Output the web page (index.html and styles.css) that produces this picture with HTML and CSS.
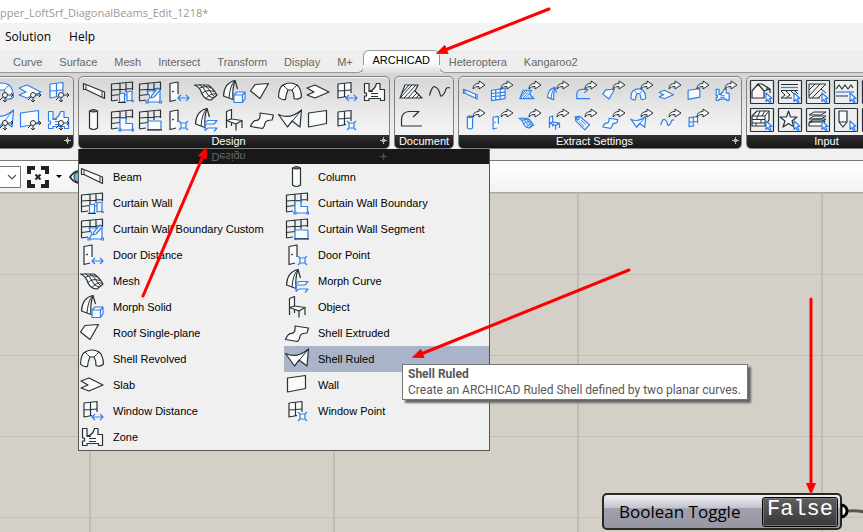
FILE: index.html
```html
<!DOCTYPE html>
<html lang="en">
<head>
<meta charset="utf-8">
<title>Grasshopper</title>
<link rel="stylesheet" href="styles.css">
</head>
<body>
<div class="app">
  <header class="titlebar">pper_LoftSrf_DiagonalBeams_Edit_1218*</header>
  <nav class="menubar">
    <button>Solution</button>
    <button>Help</button>
  </nav>
  <nav class="tabs">
    <div class="tab-run before">
      <button>Curve</button><button>Surface</button><button>Mesh</button><button>Intersect</button><button>Transform</button><button>Display</button><button>M+</button>
    </div>
    <button class="tab-active">ARCHICAD</button>
    <div class="tab-run after">
      <button>Heteroptera</button><button>Kangaroo2</button>
    </div>
  </nav>
  <main class="ribbon">
    <section class="panel cols3" data-kind="node" data-icons="shellRevolved slab window shellRuled wall zone">
      <div class="tools"></div>
      <footer><span></span><i class="more"></i></footer>
    </section>
    <section class="panel cols11" data-kind="plain" data-icons="beam curtainWall curtainCustom doorDistance mesh morphSolid roof shellRevolved slab windowDistance zone column curtainBoundary curtainSegment doorPoint morphCurve object shellExtruded shellRuled wall windowPoint">
      <div class="tools"></div>
      <footer><span>Design</span><i class="more"></i></footer>
      <div class="popup">
        <div class="popup-head"><span>Design</span><i class="more"></i></div>
        <div class="popup-list">
          <button data-icon="beam">Beam</button>
          <button data-icon="column">Column</button>
          <button data-icon="curtainWall">Curtain Wall</button>
          <button data-icon="curtainBoundary">Curtain Wall Boundary</button>
          <button data-icon="curtainCustom">Curtain Wall Boundary Custom</button>
          <button data-icon="curtainSegment">Curtain Wall Segment</button>
          <button data-icon="doorDistance">Door Distance</button>
          <button data-icon="doorPoint">Door Point</button>
          <button data-icon="mesh">Mesh</button>
          <button data-icon="morphCurve">Morph Curve</button>
          <button data-icon="morphSolid">Morph Solid</button>
          <button data-icon="object">Object</button>
          <button data-icon="roof">Roof Single-plane</button>
          <button data-icon="shellExtruded">Shell Extruded</button>
          <button data-icon="shellRevolved">Shell Revolved</button>
          <button data-icon="shellRuled" class="selected">Shell Ruled</button>
          <button data-icon="slab">Slab</button>
          <button data-icon="wall">Wall</button>
          <button data-icon="windowDistance">Window Distance</button>
          <button data-icon="windowPoint">Window Point</button>
          <button data-icon="zone">Zone</button>
        </div>
        <div class="tooltip" role="tooltip"><b>Shell Ruled</b><span>Create an ARCHICAD Ruled Shell defined by two planar curves.</span></div>
      </div>
    </section>
    <section class="panel cols2" data-kind="plain" data-icons="fill spline arc">
      <div class="tools"></div>
      <footer><span>Document</span></footer>
    </section>
    <section class="panel cols10" data-kind="extract" data-icons="beam curtain fill morph arc roof shellRevolved slab wall zone column door mesh object label shellExtruded shellRuled spline window">
      <div class="tools"></div>
      <footer><span>Extract Settings</span><i class="more"></i></footer>
    </section>
    <section class="panel cols6" data-kind="input" data-icons="house composite hatch lines blank blank brick star layers pen blank blank">
      <div class="tools"></div>
      <footer><span>Input</span><i class="more"></i></footer>
    </section>
  </main>
  <div class="toolbar">
    <div class="combo">
      <select aria-label="Zoom"><option></option></select>
      <svg viewBox="0 0 10 6"><path d="M1 1l4 4 4-4"/></svg>
    </div>
    <button class="focus" aria-label="Zoom extents">
      <svg viewBox="0 0 22 22"><path d="M2 8V2h6M14 2h6v6M20 14v6h-6M8 20H2v-6" stroke-width="4"/><path d="M8.500 8.500l5 5M13.500 8.500l-5 5" stroke-width="2"/></svg>
    </button>
    <i class="caret"></i>
    <button class="eye" aria-label="Named views">
      <svg viewBox="0 0 22 16"><path d="M1 8Q6 1 12 2Q18 2 21 8Q16 14 11 14Q5 14 1 8Z" fill="#fff" stroke="#223" stroke-width="1.6"/><circle cx="10" cy="8" r="5" fill="#59c4dc" stroke="#234"/></svg>
    </button>
  </div>
  <div class="canvas">
    <div class="node">
      <span class="node-name">Boolean Toggle</span>
      <button class="node-value">False</button>
      <svg class="grip" viewBox="0 0 24 18"><path d="M7 9Q14 8 24 10" stroke="#555" stroke-width="3"/><path d="M0 3A6 6 0 0 1 0 15Z" fill="#fff" stroke="#000" stroke-width="3"/></svg>
    </div>
  </div>
  <svg class="arrows" width="863" height="532" viewBox="0 0 863 532">
    <defs><marker id="head" viewBox="0 0 12 10" refX="2" refY="5" markerWidth="12" markerHeight="10" markerUnits="userSpaceOnUse" orient="auto"><path d="M0 0L12 5L0 10Z"/></marker></defs>
    <path d="M549 9L445 50"/>
    <path d="M143 296L203 156"/>
    <path d="M629 270L421 354"/>
    <path d="M811 299V485"/>
  </svg>
</div>
<script src="icons.js"></script>
</body>
</html>
```
FILE: styles.css
```css
* { box-sizing: border-box; }
body { margin: 0; background: #f0f0f0; font: 11px/14px "Liberation Sans", sans-serif; color: #000; }
button { border: 0; padding: 0; margin: 0; background: none; font: inherit; color: inherit; }
svg { display: block; fill: none; }
.app { position: relative; display: flex; flex-direction: column; min-height: 100vh; overflow: hidden; }

.titlebar { height: 23px; background: #fff; color: #999; font: 11px/25px "Open Sans", sans-serif; white-space: nowrap; }
.menubar { display: flex; gap: 18px; height: 27px; padding-left: 5px; background: #f3f3f3; font: 12px/27px "Open Sans", sans-serif; }

.tabs { display: flex; height: 23px; background: #eee; color: #666; }
.tab-run { display: flex; gap: 17px; margin-top: 7px; border-bottom: 1px solid #999; }
.before { padding: 0 10px 0 13px; border-right: 1px solid #999; border-radius: 0 0 6px 0; }
.after { flex: 1; padding-left: 9px; border-left: 1px solid #999; border-radius: 0 0 0 6px; }
.tab-run button { padding-bottom: 6px; margin-top: -2px; }
.tab-active { position: relative; width: 77px; margin: 0 -1px; padding-bottom: 3px; color: #000; background: linear-gradient(#fff 50%, #ddd); border-radius: 6px 6px 0 0; }
.tab-active::before { content: ""; position: absolute; inset: 0 0 auto; height: 14px; border: 1px solid #999; border-bottom: 0; border-radius: 6px 6px 0 0; }

.ribbon { display: flex; gap: 4px; height: 87px; margin-left: -14px; padding-top: 3px; background: linear-gradient(#d4d4d4, #f0f0f0 70%); }
.panel { position: relative; flex: none; height: 73px; border: 1px solid #808080; border-radius: 5px; background: linear-gradient(#d6d6d6, #f2f2f2 50px); box-shadow: inset 0 1px #f8f8f8; }
.tools { display: grid; grid-auto-rows: 28px; height: 58px; padding: 1px; }
.cols2 .tools { grid-template-columns: repeat(2, 28px); }
.cols3 .tools { grid-template-columns: repeat(3, 28px); }
.cols6 .tools { grid-template-columns: repeat(6, 28px); }
.cols10 .tools { grid-template-columns: repeat(10, 28px); }
.cols11 .tools { grid-template-columns: repeat(11, 28px); }
.tools button { display: grid; place-items: center; }
.panel footer, .popup-head { display: flex; align-items: center; height: 13px; line-height: 12px; color: #fff; background: linear-gradient(#303030, #161616); }
.panel footer { padding-bottom: 2px; border-radius: 0 0 4px 4px; }
.panel footer span, .popup-head span { flex: 1; text-align: center; }
.more { width: 7px; height: 7px; margin: 0 2px; background: linear-gradient(#bbb, #bbb) center / 1px 7px no-repeat, linear-gradient(#bbb, #bbb) center / 7px 1px no-repeat, linear-gradient(#bbb, #bbb) center / 3px 3px no-repeat; }

.icon { flex: none; width: 24px; height: 24px; overflow: visible; color: #263238; }
.icon path, .icon circle { stroke: currentColor; stroke-width: 1.2; stroke-linejoin: round; vector-effect: non-scaling-stroke; }
.icon .b { color: #2f80ed; }
.icon .w { fill: #fafafa; }
.icon .frame { fill: #eee; }
.icon .fine { stroke-width: 1; }

.popup { position: absolute; z-index: 2; top: 72px; left: -1px; width: 412px; border: 1px solid #555; border-top: 0; background: #f0f0f0; }
.popup-head { height: 15px; padding-right: 100px; background: #181818; color: #666; }
.popup-head span { transform: scaleY(-1); }
.popup-head .more { opacity: .3; }
.popup-list { display: grid; grid-template-columns: 1fr 1fr; grid-auto-rows: 26px; }
.popup-list button { display: flex; align-items: center; gap: 9px; padding-left: 1px; white-space: nowrap; }
.popup-list .selected { background: #a9b4c9; }
.tooltip { position: absolute; left: 323px; top: 215px; display: flex; flex-direction: column; padding: 1px 6px 1px 5px; border: 1px solid #767676; background: #fff; color: #575757; box-shadow: 3px 3px 2px #666; font: 12px/16px Roboto, sans-serif; white-space: nowrap; }

.toolbar { display: flex; align-items: center; height: 33px; border-top: 1px solid #777; border-bottom: 1px solid #aaa89c; background: linear-gradient(#fff, #f2f2f2); }
.combo { position: relative; width: 21px; height: 22px; }
.combo select { width: 100%; height: 100%; appearance: none; border: 1px solid #777; border-left: 0; background: #fff; }
.combo svg { position: absolute; right: 4px; top: 8px; width: 10px; height: 6px; stroke: #555; stroke-width: 1.2; }
.focus { margin-left: 6px; }
.focus svg { width: 22px; height: 22px; stroke: #222; }
.caret { margin: 0 7px; border: 3px solid transparent; border-top-color: #000; border-bottom: 0; }
.eye svg { width: 22px; height: 16px; }

.canvas { position: relative; flex: 1; background: linear-gradient(90deg, #c0bcb3 2px, transparent 2px) 89px 0 / 244px 100%, linear-gradient(#c3bfb6 1px, transparent 1px) 0 0 / 100% 81px, #d4d0c8; }
.node { position: absolute; left: 602px; top: 300px; display: flex; align-items: center; width: 240px; height: 37px; padding: 2px; border: 2px solid #282828; border-radius: 5px; background: linear-gradient(#f0f0f4, #c5c5cf 38%, #a0a0ae 40%, #9797a4); }
.node-name { flex: 1; padding-left: 13px; font: 17px/28px "Open Sans", sans-serif; }
.node-value { width: 76px; height: 30px; padding-bottom: 3px; border: 1px solid #000; border-radius: 3px; outline: 1px solid #777; outline-offset: -2px; background: linear-gradient(#606060, #363636); color: #fff; font: 22px/24px "Liberation Mono", monospace; }
.grip { position: absolute; left: 237px; top: 7px; width: 24px; height: 18px; }
.arrows { position: absolute; z-index: 5; left: 0; top: 0; pointer-events: none; }
.arrows > path { stroke: #f00; stroke-width: 3; stroke-linecap: round; marker-end: url(#head); }
.arrows marker path { fill: #f00; }
```
FILE: icons.js
```javascript
// Shapes on a 24-unit grid. p(): ink outline, w(): filled outline, b(): blue accent, f(): fine ink lines.
const p = d => `<path d="${d}"/>`;
const w = d => `<path class="w" d="${d}"/>`;
const b = d => `<g class="b"><path class="w" d="${d}"/></g>`;
const f = d => `<path class="fine" d="${d}"/>`;

const curtain = p('M1.5 21V4L22.5 2V10M10 3V14M16 3V12M1.5 10L22.5 8.5M1.5 15.5L10 14.5M1.5 21L8 20');
const door = w('M12 14V2L4 3.5V21.5L10 20') + p('M6 12L8 11');
const win = w('M17 13V2.5L4 4V18L12 16.5') + p('M10.5 3.5V17M4 11L17 10');
const morph = w('M13 .5Q2 3 1.5 16L11 19.5Q10 9 13 .5L15.500 9') + f('M13 .5Q8 5 7 18');
const distance = b('M12 18H23M15 15L12 18L15 21M20 15L23 18L20 21');
const point = b('M15 15H20V20H15ZM13 13L15 15M22 13L20 15M13 22L15 20M22 22L20 20');

const shapes = {
  beam: w('M1.5 3.500L22.500 12V18.500L4 9.500L1.500 9.500Z') + f('M1.5 9.500V3.500M4 5V9.500M20 11.500V17'),
  column: w('M7.500 3V20Q11.500 23 15.500 20V3') + '<path d="M7.5 3Q11.5 0 15.5 3Q11.5 5 7.5 3Z" fill="#777"/>',
  curtain: w('M1.5 5L22.5 2V18L1.5 21Z') + p('M8 4V20M15 3V19M1.5 10L22.5 8M1.5 15L22.5 13'),
  curtainWall: curtain + b('M9.5 14L14.5 13V21.500L9.5 22.500ZM17 12L22 11V20L17 21ZM14.5 15H17') + p('M8 22.500H16M21 21H24'),
  curtainBoundary: curtain + b('M10 10H16V15.5H22.5V22H10Z') + b('M9 21h2v2h-2zM22 21h1.500v2h-1.500z'),
  curtainCustom: curtain + b('M9 11H22V22H9L12 17Z') + b('M13 18L14 15L20 8L22 10L16 17Z') + b('M8 21h2v2h-2zM21.500 21h2v2h-2z'),
  curtainSegment: curtain + b('M10 13H23V21.500H10Z') + p('M9 22H24'),
  door, window: win, morph,
  doorDistance: door + distance,
  doorPoint: door + point,
  windowDistance: win + distance,
  windowPoint: win + point,
  mesh: w('M.5 5H14Q19 8 23 15L17 20Q11 20 8 14Q6 7 .5 5Z') + f('M5 4.500Q10 7 12 12Q14 17 19 18M9.500 5Q14 7 16 11Q18 15 21 17M5 8.500Q12 5 17 8M8 13.500Q12 9 20 11.500M12 18.500Q16 13 22 14'),
  morphSolid: morph + b('M12 15L15 12H23V19L20.500 22.500H12ZM12 15H20.500V22.500M20.500 15L23 12'),
  morphCurve: morph + b('M11 22.500V14.500L14 12.500H23L20 16H11M11 22.500L14 20H23L20 23.500'),
  roof: w('M.5 11L5 4.5L18.500 3.500L10 18.500Z'),
  shellRevolved: w('M.5 17Q1 7 5 5Q12 1 19 5Q23 8 23.5 17Q20 20.500 16 18.500Q16 13 14 10H10Q8 14 7.500 19.500Q3 20.500 .5 17Z') + f('M5 5Q7 7 10 10M19 5Q17 7 14 10'),
  slab: w('M1 8L9 5L23 12L9 18L1 15L8 12Z'),
  zone: w('M2.500 3.500H7V11.500Q13 10 14.500 3.500H18V9.500H22.500V20.500H18.500V18.500H7V20.500H2.500V16H4.500V13H2.500Z') + f('M9 13.500H16M9 16.500H16M7 11.500H11'),
  object: w('M4.500 3.500L9.500 1.500V11L20 12.500L14 16L4.500 12.500Z') + p('M4.500 12V20M14 16V22.500M20 12.500V20M9.500 15V18M4.500 12.500L9.500 11'),
  shellExtruded: w('M10 5L23.500 7L22 12Q16 12 15 15Q15 18 12.500 20.500L.5 18.500Q2 14 5 12.500Q11 13 10 5Z'),
  shellRuled: w('M.5 6.500Q12 12 23.500 2L22 19L14 13L9.500 19Z') + f('M9.500 19L23.500 2'),
  wall: w('M2.500 5L20.500 2.500V15.500L2.500 19Z'),
  fill: w('M2 18L7 5H20L17 11L24 18Z') + f('M4 13L11 5M3 17L14 5M6 18L18 5M10 18L17 10M14 18L19 13M18 18L21 15'),
  spline: p('M3.500 15.500Q6 5 9.500 7T14 14T19 12Q20 6 24 8'),
  arc: p('M24 18H3.500V11Q4 4 11 3.500H21L15 9'),
  label: w('M1 3L8 2L23 15L16 23L2 9Z') + f('M10 8L18 15M7 10L15 18') + '<circle cx="5" cy="5.500" r="2"/>',
  house: w('M2 18V11L8 4L14 11V18Z') + p('M8 4H12L20 9M14 11L20 9V13M17 7V10'),
  composite: f('M3 4.500H20M3 10.500H20M3 18H14M3 11L7 15L3 18M8 11L12 15L8 18M13 11L16 14M17 11L20 14') + b('M3 7.500H20'),
  hatch: f('M3 18V4H20L15 9L20 13M3 10L9 4M3 16L14 4M6 18L15 9M12 18L17 13M3 18H14'),
  lines: p('M2 9L5 5L8 9L11 5L14 9L17 5L19 8M2 16H14') + b('M2 12H20'),
  brick: w('M2 8L7 3H19V12L15 18H2Z') + f('M2 8H15V18M15 8L19 3M2 11.500H15M2 15H15M7 8V11.500M11 11.500V15M6 15V18M10 3L8 8M15 3L12 8'),
  star: w('M10.500 3L12.500 9H19L14 13L16 19L10.500 15.500L5 19L7 13L2 9H8.500Z'),
  layers: w('M3 18V15L8 13H19L16 18Z') + f('M3 7L8 4H20L15 7ZM3 11L8 8H20L15 11ZM3 14L8 11H20L15 14Z'),
  pen: w('M5 3H13V14L9 19L5 14Z') + f('M5 14H13'),
  blank: ''
};

const wrap = {
  plain: s => s,
  node: s => `<g class="b">${s}</g><circle class="w fine" cx="15" cy="15" r="2.500"/><path class="fine" d="M13 17L10 20M18 15H23M15 18V22M21 13L23 15L21 17M13 20L15 22L17 20"/>`,
  extract: s => `<g class="b"><g transform="translate(.5 7) scale(.65)">${s}</g></g><path class="w fine" d="M11 9Q11 3.500 17 3.500V1L23 5L17 9V6.500Q13 6 11 9Z"/>`,
  input: s => `<path class="frame" d="M1 .5H23Q23.500 .5 23.500 1V23Q23.500 23.500 23 23.500H1Q.5 23.500 .5 23V1Q.5 .5 1 .5Z"/>${s}` + b('M16 13V21.500L18 19.500L19.500 22.500L21 22L19.500 18.500H22Z')
};

const svg = (kind, name) => `<svg class="icon" viewBox="0 0 24 24" aria-hidden="true">${wrap[kind](shapes[name])}</svg>`;

document.querySelectorAll('.panel').forEach(panel => {
  const { kind, icons } = panel.dataset;
  panel.querySelector('.tools').innerHTML = icons.split(' ')
    .map(name => `<button aria-label="${name}">${svg(kind, name)}</button>`).join('');
});
document.querySelectorAll('.popup-list button').forEach(item => {
  item.insertAdjacentHTML('afterbegin', svg('plain', item.dataset.icon));
});
```
